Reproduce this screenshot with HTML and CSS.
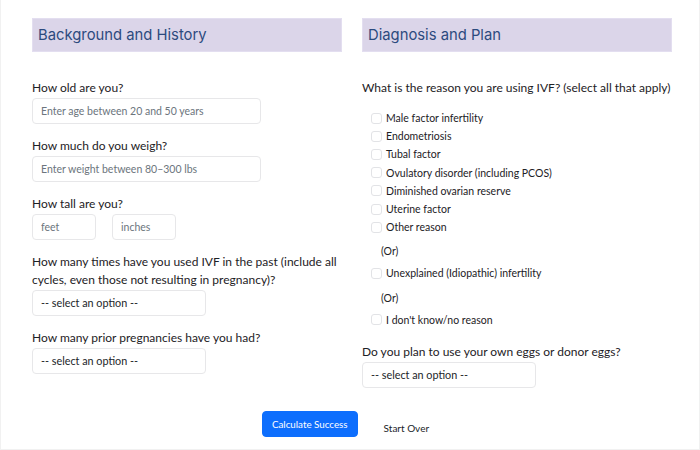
FILE: index.html
```html
<!DOCTYPE html>
<html lang="en">
<head>
<meta charset="utf-8">
<title>IVF Success Calculator</title>
<link rel="stylesheet" href="styles.css">
</head>
<body>
<div class="page">
  <div class="columns">
    <section class="col">
      <h2 class="section-title">Background and History</h2>
      <div class="field first">
        <label class="q">How old are you?</label>
        <input class="input wide" type="text" placeholder="Enter age between 20 and 50 years">
      </div>
      <div class="field">
        <label class="q">How much do you weigh?</label>
        <input class="input wide" type="text" placeholder="Enter weight between 80–300 lbs">
      </div>
      <div class="field">
        <label class="q">How tall are you?</label>
        <div class="pair">
          <input class="input small" type="text" placeholder="feet">
          <input class="input small" type="text" placeholder="inches">
        </div>
      </div>
      <div class="field">
        <label class="q">How many times have you used IVF in the past (include all cycles, even those not resulting in pregnancy)?</label>
        <div class="select">-- select an option --</div>
      </div>
      <div class="field">
        <label class="q">How many prior pregnancies have you had?</label>
        <div class="select">-- select an option --</div>
      </div>
    </section>
    <section class="col">
      <h2 class="section-title">Diagnosis and Plan</h2>
      <div class="field first">
        <label class="q">What is the reason you are using IVF? (select all that apply)</label>
        <ul class="checks main">
          <li><span class="box"></span>Male factor infertility</li>
          <li><span class="box"></span>Endometriosis</li>
          <li><span class="box"></span>Tubal factor</li>
          <li><span class="box"></span>Ovulatory disorder (including PCOS)</li>
          <li><span class="box"></span>Diminished ovarian reserve</li>
          <li><span class="box"></span>Uterine factor</li>
          <li><span class="box"></span>Other reason</li>
        </ul>
        <p class="or">(Or)</p>
        <ul class="checks">
          <li><span class="box"></span>Unexplained (Idiopathic) infertility</li>
        </ul>
        <p class="or">(Or)</p>
        <ul class="checks">
          <li><span class="box"></span>I don't know/no reason</li>
        </ul>
      </div>
      <div class="field eggs">
        <label class="q">Do you plan to use your own eggs or donor eggs?</label>
        <div class="select">-- select an option --</div>
      </div>
    </section>
  </div>
  <div class="actions">
    <button class="btn-primary" type="button">Calculate Success</button>
    <button class="btn-link" type="button">Start Over</button>
  </div>
</div>
</body>
</html>
```

FILE: styles.css
```css
* { box-sizing: border-box; }
html, body { margin: 0; padding: 0; background: #fff; }
body {
  font-family: Lato, "Noto Sans", "Liberation Sans", sans-serif;
  color: #1d2125;
}
.page {
  width: 700px;
  min-height: 450px;
  border: 1px solid #f1f1f1;
  border-top: none;
  padding: 18px 28px 0 31px;
}
.columns {
  display: grid;
  grid-template-columns: 310px 310px;
  column-gap: 20px;
  align-items: start;
}
.section-title {
  margin: 0;
  height: 34px;
  background: #dbd5e9;
  border: 1px solid #e3def0;
  color: #2c4a7e;
  font-family: Inter, "Open Sans", sans-serif;
  font-weight: 400;
  font-size: 14.8px;
  line-height: 32px;
  padding-left: 5px;
}
.field { display: flex; flex-direction: column; align-items: flex-start; margin-top: 13px; }
.field.first { margin-top: 27px; }
.q {
  font-size: 12px;
  line-height: 18px;
}
.input {
  margin-top: 1px;
  height: 26px;
  border: 1px solid #e7e7e9;
  border-radius: 4px;
  font-family: inherit;
  font-size: 10.5px;
  padding: 0 8px;
  color: #212529;
  background: #fff;
}
.input::placeholder { color: #6c757d; }
.input.wide { width: 229px; }
.pair { display: flex; gap: 16px; margin-top: 1px; }
.pair .input { margin-top: 0; }
.input.small { width: 64px; }
.select {
  margin-top: 1px;
  width: 174px;
  height: 26px;
  border: 1px solid #e7e7e9;
  border-radius: 4px;
  font-size: 10.8px;
  line-height: 24px;
  padding: 0 8px;
  color: #212529;
}
.checks {
  list-style: none;
  margin: 4px 0 0 0;
  padding: 0 0 0 9px;
}
.checks.main { margin-top: 12px; }
.checks li {
  display: flex;
  align-items: center;
  font-size: 10.5px;
  line-height: 18.2px;
  height: 18.2px;
}
.box {
  width: 11px;
  height: 11px;
  border: 1px solid #e2e3e6;
  border-radius: 3px;
  margin-right: 4px;
  flex: none;
}
.or {
  margin: 6px 0 0 0;
  padding-left: 19px;
  font-size: 10.5px;
  line-height: 18px;
}
.field.eggs { margin-top: 14px; }
.actions {
  display: flex;
  justify-content: center;
  align-items: flex-start;
  margin-top: 23px;
}
.btn-primary {
  background: #0d6efd;
  color: #fff;
  border: 1px solid #0d6efd;
  border-radius: 4px;
  height: 26px;
  padding: 0 9px;
  font-family: inherit;
  font-size: 9.8px;
}
.btn-link {
  background: none;
  border: none;
  color: #212529;
  font-family: inherit;
  font-size: 10px;
  line-height: 18px;
  padding: 8px 12px 0;
  margin-left: 14px;
  height: 26px;
}
```
